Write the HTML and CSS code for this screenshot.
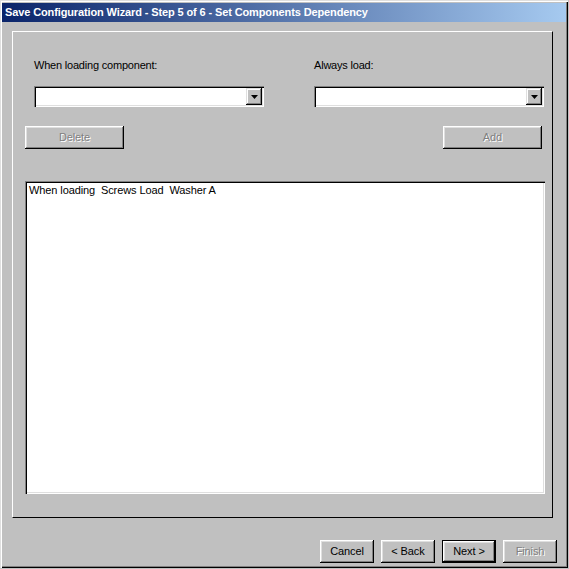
FILE: index.html
```html
<!DOCTYPE html>
<html>
<head>
<meta charset="utf-8">
<title>Save Configuration Wizard</title>
<link rel="stylesheet" href="styles.css">
</head>
<body>
<div class="window">
  <div class="titlebar"><span class="title">Save Configuration Wizard - Step 5 of 6 - Set Components Dependency</span></div>
  <div class="panel">
    <div class="labels">
      <span class="lbl lbl-left">When loading component:</span>
      <span class="lbl lbl-right">Always load:</span>
    </div>
    <div class="combos">
      <div class="combo combo-left">
        <div class="combo-field"></div>
        <div class="drop"><svg width="7" height="4" viewBox="0 0 7 4"><path d="M0 0h7L3.5 4z" fill="#000"/></svg></div>
      </div>
      <div class="combo combo-right">
        <div class="combo-field"></div>
        <div class="drop"><svg width="7" height="4" viewBox="0 0 7 4"><path d="M0 0h7L3.5 4z" fill="#000"/></svg></div>
      </div>
    </div>
    <div class="actions">
      <button class="btn btn-wide disabled">Delete</button>
      <button class="btn btn-wide disabled">Add</button>
    </div>
    <div class="list"><div class="list-item">When loading  Screws Load  Washer A</div></div>
  </div>
  <div class="footer">
    <button class="btn btn-nav">Cancel</button>
    <button class="btn btn-nav">&lt; Back</button>
    <button class="btn btn-nav btn-default">Next &gt;</button>
    <button class="btn btn-nav disabled">Finish</button>
  </div>
</div>
</body>
</html>
```

FILE: styles.css
```css
html, body {
  margin: 0;
  padding: 0;
  background: #c0c0c0;
}
body {
  width: 569px;
  height: 569px;
  overflow: hidden;
  font-family: "Liberation Sans", Arial, sans-serif;
  font-size: 11px;
  color: #000;
}
.window {
  width: 568px;
  height: 568px;
  box-sizing: border-box;
  padding: 3px 2px 0 2px;
  background: #c0c0c0;
  box-shadow: inset 1px 1px 0 #dfdfdf, inset 2px 2px 0 #fff, inset -1px -1px 0 #000, inset -2px -2px 0 #808080;
  display: flex;
  flex-direction: column;
}
.titlebar {
  height: 19px;
  background: linear-gradient(to right, #0a246a, #a6caf0);
  display: flex;
  align-items: center;
  padding-left: 3px;
}
.title {
  color: #fff;
  font-weight: bold;
  font-size: 11px;
  font-family: "Liberation Sans", Arial, sans-serif;
  letter-spacing: -0.12px;
  white-space: nowrap;
  line-height: 13px;
}
.panel {
  margin: 9px 0 0 10px;
  width: 541px;
  height: 487px;
  box-sizing: border-box;
  border-top: 1px solid #fff;
  border-left: 1px solid #fff;
  border-right: 1px solid #000;
  border-bottom: 1px solid #000;
  display: flex;
  flex-direction: column;
}
.labels {
  display: flex;
  margin-top: 27px;
  height: 13px;
  line-height: 13px;
  letter-spacing: -0.2px;
}
.lbl {
  white-space: nowrap;
}
.lbl-left {
  margin-left: 21px;
  width: 280px;
}
.combos {
  display: flex;
  margin-top: 14px;
}
.combo {
  position: relative;
  width: 230px;
  height: 21px;
  box-sizing: border-box;
  background: #fff;
  box-shadow: inset 1px 1px 0 #808080, inset 2px 2px 0 #000, inset -1px -1px 0 #fff, inset -2px -2px 0 #dfdfdf;
  display: flex;
  justify-content: flex-end;
  padding: 2px;
}
.combo-left {
  margin-left: 21px;
}
.combo-right {
  margin-left: 50px;
}
.combo-field {
  flex: 1;
}
.drop {
  width: 16px;
  height: 17px;
  box-sizing: border-box;
  background: #c0c0c0;
  box-shadow: inset -1px -1px 0 #000, inset 1px 1px 0 #dfdfdf, inset -2px -2px 0 #808080, inset 2px 2px 0 #fff;
  display: flex;
  align-items: center;
  justify-content: center;
  padding-top: 1px;
}
.drop svg {
  display: block;
}
.actions {
  display: flex;
  justify-content: space-between;
  margin: 19px 10px 0 12px;
}
.btn {
  font-family: "Liberation Sans", Arial, sans-serif;
  font-size: 11px;
  color: #000;
  background: #c0c0c0;
  border: none;
  margin: 0;
  padding: 0;
  box-sizing: border-box;
  box-shadow: inset -1px -1px 0 #000, inset 1px 1px 0 #fff, inset -2px -2px 0 #808080, inset 2px 2px 0 #dfdfdf;
  line-height: 13px;
  letter-spacing: -0.1px;
}
.btn-wide {
  width: 99px;
  height: 23px;
}
.disabled {
  color: #808080;
  text-shadow: 1px 1px 0 #fff;
}
.list {
  margin: 32px 0 0 12px;
  width: 520px;
  height: 313px;
  box-sizing: border-box;
  background: #fff;
  box-shadow: inset 1px 1px 0 #808080, inset 2px 2px 0 #000, inset -1px -1px 0 #fff, inset -2px -2px 0 #dfdfdf;
  padding: 3px 4px;
}
.list-item {
  white-space: pre;
  line-height: 13px;
  letter-spacing: -0.1px;
}
.footer {
  display: flex;
  gap: 7px;
  margin: 22px 0 0 318px;
}
.btn-nav {
  width: 54px;
  height: 23px;
}
.btn-default {
  border: 1px solid #000;
}
```
